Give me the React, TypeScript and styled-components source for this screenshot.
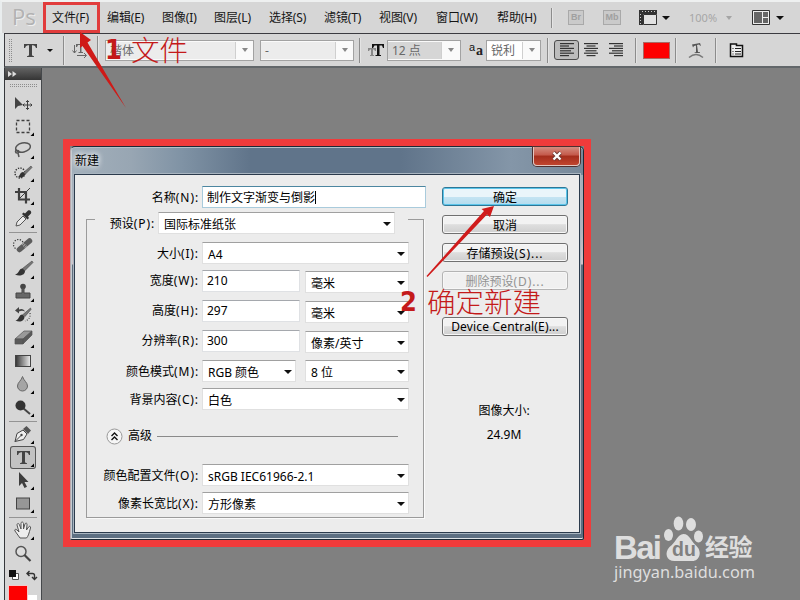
import React from "react";
import styled, { createGlobalStyle } from "styled-components";

const Global = createGlobalStyle`
  * { box-sizing: border-box; }
  body { margin: 0; overflow: hidden; font: 12px/16px "Noto Sans", "Noto Sans CJK SC", sans-serif; color: #151515; }
  svg { display: block; flex: none; }
`;

const Screen = styled.div`
  position: relative;
  width: 800px;
  height: 600px;
  overflow: hidden;
  display: flex;
  flex-direction: column;
  background: #808080;
`;

const MenuBar = styled.div`
  height: 33px;
  flex: none;
  display: grid;
  grid-template-columns: 40px 55px 55px 52px 55px 55px 55px 57px 61px 54px 17px 35px 36px 23px 27px 37px 26px 24px 20px;
  padding-left: 10px;
  align-items: center;
  background: #d6d6d6;
  border-top: 2px solid #eef0f0;
  border-left: 2px solid #e9edee;
  white-space: nowrap;
`;

const Logo = styled.span`
  font: 22px/26px "Open Sans", sans-serif;
  color: #b2b2b2;
  text-shadow: 1px 1px 0 #efefef;
  margin-top: -4px;
`;

const MenuItem = styled.span`
  position: relative;
  letter-spacing: -0.1px;
  padding-top: 1px;
`;

const Marker = styled.div`
  position: absolute;
  left: -9px;
  top: -7px;
  width: 57px;
  height: 31px;
  border: 3px solid #e13c3c;
`;

const Divider = styled.i<{ $h: number }>`
  width: 1px;
  height: ${(p) => p.$h}px;
  background: #8c8c8c;
  box-shadow: 1px 0 0 #e4e4e4;
`;

const AppBadge = styled.span<{ $w: number }>`
  width: ${(p) => p.$w}px;
  height: 15px;
  border: 1px solid #a9a9a9;
  background: #cacaca;
  color: #a0a0a0;
  font: bold 9px/13px "Liberation Sans", sans-serif;
  text-align: center;
`;

const Caret = styled.i<{ $w?: number; $c?: string }>`
  width: 0;
  height: 0;
  border: ${(p) => (p.$w ?? 8) / 2}px solid transparent;
  border-top: ${(p) => (p.$w ?? 8) * 0.6}px solid ${(p) => p.$c ?? "#111"};
  border-bottom: 0;
`;

const Faint = styled.span`
  font-size: 11px;
  color: #a6a6a6;
`;

const OptionsBar = styled.div`
  height: 35px;
  flex: none;
  display: grid;
  grid-template-columns: 15px 23px 16px 9px 25px 8px 155px 99px 9px 19px 82px 17px 61px 7px 30px 25px 26px 8px 32px 13px 27px 14px 20px;
  margin-left: 4px;
  padding-left: 4px;
  align-items: center;
  background: #d6d6d6;
  border-top: 1px solid #3b3b40;
  border-left: 1px solid #3b3b40;
  border-bottom: 2px solid #62676a;
`;

const Dots = styled.i<{ $w: number; $h: number }>`
  width: ${(p) => p.$w}px;
  height: ${(p) => p.$h}px;
  background: radial-gradient(circle at 0.5px 0.5px, #8d8d8d 0.7px, transparent 0.9px) 0 0 / 2px 2px;
`;

const Combo = styled.div<{ $w: number; $arrow: number; $fill: string }>`
  width: ${(p) => p.$w}px;
  height: 21px;
  display: grid;
  grid-template-columns: 1fr ${(p) => p.$arrow}px;
  border: 1px solid #a2a2a2;
  background: #fafafa;
  color: #686868;
  line-height: 17px;
  > span { margin: 1px 0; padding-left: 4px; background: ${(p) => p.$fill}; border-right: 1px solid #cfcfcf; }
  > i { place-self: center; }
`;

const AlignButton = styled.div<{ $on?: boolean }>`
  width: 25px;
  height: 20px;
  display: grid;
  place-items: center;
  border-radius: 3px;
  border: 1px solid ${(p) => (p.$on ? "#4c4c4c" : "transparent")};
  background: ${(p) => (p.$on ? "#bcbcbc" : "transparent")};
  margin-left: ${(p) => (p.$on ? 0 : -6)}px;
`;

const Swatch = styled.div`
  width: 27px;
  height: 17px;
  background: #fd0000;
  border: 1px solid #a96a64;
`;

const Workspace = styled.div`
  flex: 1;
  display: flex;
  min-height: 0;
`;

const Gutter = styled.div`
  width: 4px;
  margin-top: -35px;
  background: #e6eaeb;
`;

const Toolbox = styled.div`
  width: 38px;
  flex: none;
  display: flex;
  flex-direction: column;
  background: #d6d6d6;
  border-left: 1px solid #35383c;
  border-right: 1px solid #45484b;
`;

const ToolHead = styled.div`
  height: 12px;
  flex: none;
  background: linear-gradient(#626262, #353535);
  padding: 3px 0 0 3px;
`;

const Handle = styled.div`
  height: 12px;
  flex: none;
  padding: 4px 0 0 5px;
  > i { display: block; }
`;

const Tool = styled.div<{ $on?: boolean }>`
  height: 23px;
  flex: none;
  background: ${(p) => (p.$on ? "#c2c2c2" : "none")};
  box-shadow: ${(p) => (p.$on ? "inset 0 0 0 1px #555" : "none")};
  border-radius: 3px;
  margin: 0 5px 0 5px;
  > svg { margin-left: -5px; }
`;

const ToolRule = styled.i<{ $below: number }>`
  height: 1px;
  flex: none;
  margin: 2px 4px ${(p) => p.$below}px;
  background: #949494;
`;

const SwatchRow = styled.div`
  display: flex;
  flex: none;
  align-items: flex-end;
  height: 16px;
  padding-left: 3px;
`;

const Fore = styled.div`
  width: 20px;
  height: 16px;
  background: #fd0000;
  border: 1px solid #f3c9c9;
`;
const Back = styled.div`
  width: 9px;
  height: 6px;
  background: #fff;
`;

const Canvas = styled.div`
  flex: 1;
  padding: 71px 0 0 21px;
`;

const RedFrame = styled.div`
  width: 528px;
  height: 408px;
  border: 7px solid #f03b3b;
`;

const Dialog = styled.div`
  height: 394px;
  display: flex;
  flex-direction: column;
  border: 1px solid #1d2a36;
  border-left-color: #b9a7ab;
  border-radius: 5px 5px 2px 2px;
  padding: 0 3px 6px 3px;
  background:
    linear-gradient(90deg, #a3b0bb 0, #98a6b3 60px, #8093a5 110px, #60748a 180px, #60748a 330px, #8496a8 440px, #77899a 100%) 0 0 / 100% 28px no-repeat,
    linear-gradient(#a3afba 28px, #b3b5c0 85px, #d0c4ca 117px, #606f7f 118px, #5d6f82);
  box-shadow: inset 0 1px 0 #b5c0c8, inset 1px 0 0 #c5cdd3, inset 0 -1px 0 #dfe3e6;
`;

const TitleBar = styled.div`
  height: 27px;
  flex: none;
  display: flex;
  justify-content: space-between;
  > span { padding: 6px 0 0 1px; color: #000; text-shadow: 0 0 6px #fff, 0 0 6px #fff; }
`;

const Close = styled.div`
  width: 47px;
  height: 19px;
  display: grid;
  place-items: center;
  border: 1px solid #e3c7c1;
  border-top: 0;
  border-radius: 0 0 4px 4px;
  background: linear-gradient(#d48c80 0, #c4594a 45%, #a42d1c 50%, #c0452f 100%);
  box-shadow: 0 0 0 1px #4d3030;
`;

const Body = styled.div`
  flex: 1;
  display: flex;
  background: #ececec;
  border: 1px solid #2b3a4c;
  outline: 1px solid #a9b5c0;
  color: #000;
`;

const Form = styled.div`
  width: 356px;
  padding: 11px 0 0 11px;
`;

const Row = styled.div<{ $top: number }>`
  display: flex;
  align-items: flex-start;
  height: 22px;
  margin-top: ${(p) => p.$top}px;
`;

const Label = styled.label<{ $w: number; $pad?: number }>`
  width: ${(p) => p.$w}px;
  flex: none;
  padding: ${(p) => p.$pad ?? 4}px 3px 0 0;
  text-align: right;
  white-space: nowrap;
`;

const Hotkey = styled.span`
  letter-spacing: 0.9px;
`;

const Input = styled.div<{ $w: number; $focus?: boolean }>`
  width: ${(p) => p.$w}px;
  height: 22px;
  padding: ${(p) => (p.$focus ? 3 : 2)}px 4px 0;
  background: #fff;
  border: 1px solid ${(p) => (p.$focus ? "#a9cbdc" : "#dfe1e4")};
  border-top-color: ${(p) => (p.$focus ? "#4c86a0" : "#a5a8ad")};
  display: flex;
  > i { width: 1px; height: 13px; background: #000; margin-top: 1px; }
`;

const SelectBox = styled.div<{ $w: number; $gap?: number; $drop?: number }>`
  width: ${(p) => p.$w}px;
  height: 22px;
  margin: ${(p) => p.$drop ?? 0}px 0 0 ${(p) => p.$gap ?? 0}px;
  padding: 0 3px 0 5px;
  display: flex;
  align-items: center;
  justify-content: space-between;
  background: #fff;
  border: 1px solid #e0e0e0;
  border-top-color: #a0a0a0;
  white-space: nowrap;
  > span { padding-top: 4px; }
  > i { margin-top: 2px; }
`;

const Group = styled.div`
  width: 338px;
  height: 299px;
  margin-top: 11px;
  border: 1px solid #9b9b9b;
  box-shadow: 1px 1px 0 #fafafa;
`;

const PresetRow = styled.div`
  display: flex;
  width: 313px;
  height: 22px;
  margin: -8px 0 0 8px;
  background: #ececec;
  padding-right: 6px;
`;

const Advanced = styled.div`
  display: flex;
  align-items: center;
  height: 18px;
  margin: 17px 0 0 19px;
  gap: 5px;
  > hr { width: 241px; margin: 0; border: 0; border-top: 1px solid #8a8a8a; }
`;

const Actions = styled.div`
  width: 126px;
  margin-left: 11px;
  padding-top: 12px;
  display: flex;
  flex-direction: column;
  gap: 9px;
`;

const Button = styled.div<{ $kind?: "primary" | "disabled"; $apart?: boolean }>`
  height: 19px;
  flex: none;
  margin-top: ${(p) => (p.$apart ? 18 : 0)}px;
  border-radius: 3px;
  border: 1px solid ${(p) => (p.$kind === "primary" ? "#2d7797" : p.$kind === "disabled" ? "#b4b4b4" : "#707070")};
  background: ${(p) =>
    p.$kind === "primary"
      ? "linear-gradient(#eaf5fa 50%, #c5e4f2 51%, #b4dcee)"
      : p.$kind === "disabled"
      ? "#f0f0f0"
      : "linear-gradient(#f2f2f2 45%, #dedede 51%, #cfcfcf)"};
  box-shadow: inset 0 0 0 1px ${(p) => (p.$kind === "primary" ? "#5cc5ea" : "#f7f7f7")};
  color: ${(p) => (p.$kind === "disabled" ? "#939393" : "#000")};
  text-align: center;
  line-height: ${(p) => (p.$apart ? 18 : 20)}px;
  letter-spacing: ${(p) => (p.$apart ? "0.17px" : "0")};
  white-space: nowrap;
`;

const Size = styled.div`
  margin-top: 54px;
  margin-left: -2px;
  text-align: center;
  line-height: 24px;
`;

const Overlay = styled.svg`
  position: absolute;
  inset: 0;
`;

const Note = styled.div<{ $x: number; $y: number; $gap: number }>`
  position: absolute;
  left: ${(p) => p.$x}px;
  top: ${(p) => p.$y}px;
  display: flex;
  gap: ${(p) => p.$gap}px;
  color: #c41a1a;
  font: 300 28.5px/32px "Noto Sans CJK SC", sans-serif;
  white-space: nowrap;
  > b { width: 16px; font: bold 27px/34px "DejaVu Sans Condensed", "DejaVu Sans", sans-serif; font-stretch: condensed; }
`;

const Watermark = styled.div`
  position: absolute;
  left: 614px;
  top: 514px;
  width: 145px;
  color: #dedede;
`;
const Brand = styled.div`
  display: flex;
  height: 48px;
  align-items: flex-end;
  > b { width: 50px; font: bold 33px/28px "Liberation Sans", sans-serif; letter-spacing: -1.7px; }
  > strong { font: bold 24px/33px "Noto Sans CJK SC", sans-serif; margin: 0 0 0 2px; letter-spacing: -0.5px; }
`;
const Site = styled.div`
  font: 16.3px/20px "Noto Sans", sans-serif;
  white-space: nowrap;
`;

const corner = <path d="M29 17.5v3.5h-3.5z" fill="#000" />;
const dark = "#3f3f3f";

const icons: Record<string, React.ReactNode> = {
  move: (
    <>
      <path d="M10 5v12l3-3 5-1z" fill="#444" />
      <path d="M22.500 8.500v9M18 13h9M21 10l1.500-1.500L24 10M21 16l1.500 1.500 1.500-1.500M19.500 11.500L18 13l1.500 1.500M25.500 11.500L27 13l-1.500 1.500" stroke={dark} fill="none" />
    </>
  ),
  marquee: <rect x="11.500" y="5.500" width="13" height="12" fill="none" stroke={dark} strokeWidth="1.300" strokeDasharray="3 2" />,
  lasso: (
    <g fill="none" stroke="#555" strokeWidth="1.500">
      <ellipse cx="18" cy="9.500" rx="7.500" ry="4.500" transform="rotate(-12 18 9.500)" />
      <path d="M12 12c-2 0-2 3 0 3 3 0 2-3 0-2.500M13 15l1 4" />
    </g>
  ),
  quick: (
    <>
      <circle cx="15" cy="12" r="5" fill="none" stroke="#333" strokeWidth="1.400" strokeDasharray="1.300 1.300" />
      <path d="M26 5l-8 7 1.500 2L27 6.500z" fill="#777" stroke="#444" strokeWidth=".6" />
      <path d="M18 11c-3 0-3 4-5 5 3 1.500 7 0 7-3z" fill="#333" />
    </>
  ),
  crop: (
    <g fill="none" stroke={dark} strokeWidth="2.200">
      <path d="M14 4v11.500h11M10 8h11v11.500" />
      <path d="M15 14l10-10" strokeWidth="1" />
    </g>
  ),
  dropper: (
    <>
      <path d="M11 19l1-4 6-6 3 3-6 6z" fill="#e9e9e9" stroke="#555" />
      <path d="M17 7l1.500-1.500 1.500 1 3-3c2-1 4 1 3 3l-3 3 1 1.500-1.500 1.500z" fill="#333" />
    </>
  ),
  heal: (
    <>
      <circle cx="13.500" cy="9.500" r="5" fill="none" stroke="#333" strokeWidth="1.200" strokeDasharray="1.200 1.500" />
      <path d="M14.500 14.500L24.500 6" stroke="#5c5c5c" strokeWidth="5.500" strokeLinecap="round" />
      <path d="M17.500 8.500l4 4" stroke="#aaa" strokeWidth="3" strokeDasharray="1 1" />
    </>
  ),
  brush: (
    <>
      <path d="M27 3l-9.500 7.500 2 2.500L28 4.500z" fill="#777" stroke="#444" strokeWidth=".6" />
      <path d="M17.500 10.500c-4 0-3 5-7.500 6 4 2 10 1 10-3.500z" fill="#333" />
    </>
  ),
  stamp: (
    <>
      <circle cx="18" cy="5.500" r="2.800" fill="#444" />
      <path d="M17 7h2v5h6v5H11v-5h6z" fill="#666" stroke="#444" />
    </>
  ),
  history: (
    <>
      <path d="M10 6.500L14 3v2.500c3-1.500 5 0 6 2-2-1-4-1-6 0v2z" fill="#444" />
      <path d="M25.500 4L18 10.500l2 2 6-7z" fill="#777" stroke="#444" strokeWidth=".6" />
      <path d="M17.500 10.500c-4 0-3 5-7 6 4 2 9 1 9-4z" fill="#333" />
      <path d="M25 9q1 6-5 8" fill="none" stroke="#444" strokeWidth="1.200" strokeDasharray="1 1.500" />
    </>
  ),
  eraser: (
    <>
      <path d="M10 12l9-8h8l-9 8z" fill="#999" stroke="#555" strokeWidth=".7" />
      <path d="M10 12h8v5h-8zM18 12l9-8v4l-9 9z" fill="#5a5a5a" stroke="#555" strokeWidth=".7" />
    </>
  ),
  gradient: (
    <>
      <defs><linearGradient id="fade"><stop stopColor="#333" /><stop offset="1" stopColor="#eee" /></linearGradient></defs>
      <rect x="10.500" y="5.500" width="15" height="11" fill="url(#fade)" stroke="#444" />
    </>
  ),
  blur: <path d="M17.500 3.500c1 4 5 6 5 9.500a5 5 0 0 1-10 0c0-3.500 4-5.500 5-9.500z" fill="#a5a5a5" stroke="#666" />,
  dodge: (
    <>
      <path d="M18 12l7 6" stroke="#444" strokeWidth="2" />
      <circle cx="15.500" cy="9.500" r="5" fill="#333" />
    </>
  ),
  pen: (
    <>
      <path d="M10 18.500l2-8 6-3.500 4 4-3.500 5.500z" fill="#eee" stroke="#444" />
      <path d="M10 18.500l6-6" stroke="#444" />
      <circle cx="16.500" cy="12" r="1.200" fill="#444" />
      <path d="M18 6l3.500-3L26 7.500 23 11z" fill="#555" />
    </>
  ),
  type: <path d="M12 5h13v4h-1q-.5-2.500-3-2.700h-1V16q0 1 2 1.200V18h-7v-.8q2-.2 2-1.200V6.300h-1q-2.500.2-3 2.700h-1z" fill="#444" />,
  select: <path d="M14 3v14l3-3 2.500 5 2.500-1.200-2.500-4.800h4z" fill="#3d3d3d" />,
  shape: <rect x="11.500" y="6" width="13" height="11" fill="#979797" stroke="#444" />,
  hand: <path d="M15 19l-5-7c-1-2 1-2 2-1l2 2-2-7c0-2 2-2 2.500 0L16 10V4.500c0-2 2.200-2 2.500 0V10l1.500-5c.5-1.500 2.500-1 2 .800L21.500 11l2-3c1-1.500 2.500-.5 2 1-1.500 5-2 8-4 10z" fill="#eee" stroke="#555" />,
  zoom: (
    <>
      <circle cx="16" cy="9.500" r="5" fill="#ddd" stroke="#555" strokeWidth="1.500" />
      <path d="M19.500 13l6 6" stroke="#444" strokeWidth="2.200" />
    </>
  ),
};

const toolGroups = [
  ["move", "marquee", "lasso", "quick", "crop", "dropper"],
  ["heal", "brush", "stamp", "history", "eraser", "gradient", "blur", "dodge"],
  ["pen", "type", "select", "shape"],
  ["hand", "zoom"],
];

const TypeGlyph = () => (
  <svg width="13" height="13">
    <path d="M0 0h13v4h-1q-.5-2.500-3-2.700H8V11q0 1 2 1.200v.8H3v-.8q2-.2 2-1.200V1.300H4Q1.500 1.500 1 4H0z" fill="#444" />
  </svg>
);

const Lines = ({ at }: { at: 0 | 0.5 | 1 }) => (
  <svg width="14" height="14">
    {[14, 9, 14, 11, 14, 9].map((w, i) => (
      <rect key={i} x={(14 - w) * at} y={i * 2.4} width={w} height="1.200" fill="#333" />
    ))}
  </svg>
);

const menus = ["文件(F)", "编辑(E)", "图像(I)", "图层(L)", "选择(S)", "滤镜(T)", "视图(V)", "窗口(W)", "帮助(H)"];

const Keyed = ({ name, suffix }: { name: string; suffix: string }) => (
  <>
    {name}
    <Hotkey>{suffix}</Hotkey>
  </>
);

const Select = ({ w, gap, drop, children }: { w: number; gap?: number; drop?: number; children: React.ReactNode }) => (
  <SelectBox $w={w} $gap={gap} $drop={drop}>
    <span>{children}</span>
    <Caret />
  </SelectBox>
);

const measures = [
  { label: "宽度", hotkey: "(W):", value: "210", unit: "毫米", top: 6 },
  { label: "高度", hotkey: "(H):", value: "297", unit: "毫米", top: 8 },
  { label: "分辨率", hotkey: "(R):", value: "300", unit: "像素/英寸", top: 8 },
];

export default function App() {
  return (
    <Screen>
      <Global />
      <MenuBar>
        <Logo>Ps</Logo>
        {menus.map((m, i) => (
          <MenuItem key={m}>
            {i === 0 && <Marker />}
            {m}
          </MenuItem>
        ))}
        <Divider $h={20} />
        <AppBadge $w={16}>Br</AppBadge>
        <AppBadge $w={18}>Mb</AppBadge>
        <svg width="18" height="16">
          <path d="M0 0h18v4H4v11H0z" fill="#333" />
          <path d="M4.500 4.500h13v10h-13z" fill="#e2e2e2" stroke="#333" />
          <path d="M3 1.500h15M1.500 4v11" stroke="#ccc" strokeDasharray="1 2" />
        </svg>
        <Caret />
        <Faint>100%</Faint>
        <Caret $w={7} $c="#a5a5a5" />
        <svg width="18" height="15">
          <path d="M.5.500h17v14H.5z" fill="#eee" stroke="#333" />
          <path d="M2 2h8v11H2zM11 2h5v5h-5zM11 8h5v5h-5z" fill="#666" />
        </svg>
        <Caret />
      </MenuBar>
      <OptionsBar>
        <Dots $w={4} $h={23} />
        <TypeGlyph />
        <Caret $w={6} />
        <Divider $h={29} />
        <svg width="16" height="16">
          <path d="M2.500 3v8M.5 8.500l2 2.500 2-2.500M5 13.500h9M12 11l2.500 2.500L12 16" fill="none" stroke="#666" />
          <path d="M4 2h9v3h-1l-1-2H9.500v7h1.500v1H6.500v-1H8V3H6L5 5H4z" fill="#666" />
        </svg>
        <Divider $h={29} />
        <Combo $w={149} $arrow={17} $fill="#ececec"><span>楷体</span><Caret $w={7} $c="#888" /></Combo>
        <Combo $w={94} $arrow={17} $fill="#ececec"><span>-</span><Caret $w={7} $c="#888" /></Combo>
        <Divider $h={25} />
        <svg width="17" height="15">
          <path d="M0 5h8v3H7L6 6.500H5V12h1v1H2v-1h1V6.500H2L1 8H0z" fill="#888" />
          <path d="M4 1h12v4h-1l-1-2.500h-2.500V12H13v1H7.500v-1H9V2.500H6.500L5 5H4z" fill="#111" />
        </svg>
        <Combo $w={74} $arrow={18} $fill="#d6d6d6"><span>12 点</span><Caret $w={7} $c="#888" /></Combo>
        <svg width="16" height="16">
          <text x="0" y="9" fontSize="11" fontFamily="Liberation Sans" fill="#111">a</text>
          <text x="7" y="13" fontSize="14" fontFamily="Liberation Serif" fontWeight="bold" fill="#222">a</text>
        </svg>
        <Combo $w={55} $arrow={17} $fill="#fff"><span>锐利</span><Caret $w={7} $c="#888" /></Combo>
        <Divider $h={25} />
        <AlignButton $on><Lines at={0} /></AlignButton>
        <AlignButton><Lines at={0.5} /></AlignButton>
        <AlignButton><Lines at={1} /></AlignButton>
        <Divider $h={25} />
        <Swatch />
        <Divider $h={25} />
        <svg width="16" height="17">
          <path d="M4 2.500l8-1.500 1 3-1-.5-1-1-2 .5 1 7 2 .2v.8H6l2-1V3.500L6 4 5 5.500z" fill="#555" />
          <path d="M1 15.500q7-6 14 0" fill="none" stroke="#777" strokeWidth="1.500" />
        </svg>
        <Divider $h={25} />
        <svg width="16" height="16">
          <path d="M1.500 3.500v-1.500h6v1.500h6v11h-12z" fill="#eee" stroke="#111" strokeWidth="1.500" />
          <path d="M3.500 6.500h1M6 6.500h6M3.500 9.500h1M6 9.500h6M3.500 12h1M6 12h6" stroke="#222" />
        </svg>
      </OptionsBar>
      <Workspace>
        <Gutter />
        <Toolbox>
          <ToolHead>
            <svg width="9" height="6"><path d="M0 0l4 3-4 3zM4.500 0l4 3-4 3z" fill="#ddd" /></svg>
          </ToolHead>
          <Handle><Dots $w={27} $h={4} /></Handle>
          {toolGroups.map((group, g) => (
            <React.Fragment key={g}>
              {g > 0 && <ToolRule $below={g === 1 ? 2 : 1} />}
              {group.map((name) => (
                <Tool key={name} $on={name === "type"}>
                  <svg width="36" height="23">
                    {icons[name]}
                    {name !== "move" && name !== "zoom" && corner}
                  </svg>
                </Tool>
              ))}
            </React.Fragment>
          ))}
          <svg width="36" height="20">
            <path d="M7.500 8.500h6v6h-6z" fill="#fff" stroke="#555" />
            <path d="M4 5h7v7H4z" fill="#111" />
            <path d="M22.500 8.500h5q2 0 2 2v3M24.500 6l-2.500 2.500 2.500 2.500M27 12l2.500 2.500L32 12" fill="none" stroke="#333" strokeWidth="1.400" />
          </svg>
          <SwatchRow><Fore /><Back /></SwatchRow>
        </Toolbox>
        <Canvas>
          <RedFrame>
            <Dialog>
              <TitleBar>
                <span>新建</span>
                <Close>
                  <svg width="12" height="10"><path d="M2.500 1.500l7 7M9.500 1.500l-7 7" stroke="#6d3a35" strokeWidth="4" /><path d="M2.500 1.500l7 7M9.500 1.500l-7 7" stroke="#fff" strokeWidth="2.300" /></svg>
                </Close>
              </TitleBar>
              <Body>
                <Form>
                  <Row $top={0}>
                    <Label $w={116}><Keyed name="名称" suffix="(N):" /></Label>
                    <Input $w={224} $focus>制作文字渐变与倒影<i /></Input>
                  </Row>
                  <Group>
                    <PresetRow>
                      <Label $w={63}><Keyed name="预设" suffix="(P):" /></Label>
                      <Select w={237}>国际标准纸张</Select>
                    </PresetRow>
                    <Row $top={8}>
                      <Label $w={115}><Keyed name="大小" suffix="(I):" /></Label>
                      <Select w={207}>A4</Select>
                    </Row>
                    {measures.map((m) => (
                      <Row key={m.label} $top={m.top}>
                        <Label $w={115} $pad={3}><Keyed name={m.label} suffix={m.hotkey} /></Label>
                        <Input $w={98}>{m.value}</Input>
                        <Select w={104} gap={5} drop={1}>{m.unit}</Select>
                      </Row>
                    ))}
                    <Row $top={8}>
                      <Label $w={115}><Keyed name="颜色模式" suffix="(M):" /></Label>
                      <Select w={94}>RGB 颜色</Select>
                      <Select w={104} gap={9}>8 位</Select>
                    </Row>
                    <Row $top={6}>
                      <Label $w={115}><Keyed name="背景内容" suffix="(C):" /></Label>
                      <Select w={207}>白色</Select>
                    </Row>
                    <Advanced>
                      <svg width="17" height="17">
                        <circle cx="8.500" cy="8.500" r="7.500" fill="#f6f6f6" stroke="#999" />
                        <path d="M5.500 8l3-3 3 3M5.500 12l3-3 3 3" fill="none" stroke="#111" strokeWidth="1.400" />
                      </svg>
                      <span>高级</span>
                      <hr />
                    </Advanced>
                    <Row $top={19}>
                      <Label $w={115}><Keyed name="颜色配置文件" suffix="(O):" /></Label>
                      <Select w={207}>sRGB IEC61966-2.1</Select>
                    </Row>
                    <Row $top={6}>
                      <Label $w={115}><Keyed name="像素长宽比" suffix="(X):" /></Label>
                      <Select w={207}>方形像素</Select>
                    </Row>
                  </Group>
                </Form>
                <Actions>
                  <Button $kind="primary">确定</Button>
                  <Button>取消</Button>
                  <Button><Keyed name="存储预设" suffix="(S)..." /></Button>
                  <Button $kind="disabled"><Keyed name="删除预设" suffix="(D)..." /></Button>
                  <Button $apart>Device Central(E)...</Button>
                  <Size>图像大小:<br />24.9M</Size>
                </Actions>
              </Body>
            </Dialog>
          </RedFrame>
        </Canvas>
      </Workspace>
      <Overlay width="800" height="600">
        <path d="M80 32l11 8-3.500 2.500L126 108 82.500 46 80 48z" fill="#cf1a17" />
        <path d="M494 206l-4 11-3-2.500L427.500 277l-1-1L484 211l-2.500-2z" fill="#d01b1b" />
      </Overlay>
      <Note $x={105} $y={33} $gap={10}><b>1</b>文件</Note>
      <Note $x={400} $y={285} $gap={11}><b>2</b>确定新建</Note>
      <Watermark>
        <Brand>
          <b>Bai</b>
          <svg width="39" height="46" viewBox="-2 0 39 46">
            <g fill="#dedede">
              <ellipse cx="2.500" cy="19" rx="4.500" ry="6" />
              <ellipse cx="12.500" cy="7.500" rx="4.800" ry="7" />
              <ellipse cx="25" cy="8.500" rx="5" ry="6.500" />
              <ellipse cx="32.500" cy="20.500" rx="4.500" ry="6" />
              <path d="M17.500 18c6 0 8 8 13 12 6 6 3 15-4 15H8.500C.5 45-2 37 3.500 31c6-4 8-13 14-13z" />
            </g>
            <text x="6" y="40" fontSize="19.500" fontWeight="bold" fontFamily="Liberation Sans" fill="#808080">du</text>
          </svg>
          <strong>经验</strong>
        </Brand>
        <Site>jingyan.baidu.com</Site>
      </Watermark>
    </Screen>
  );
}
